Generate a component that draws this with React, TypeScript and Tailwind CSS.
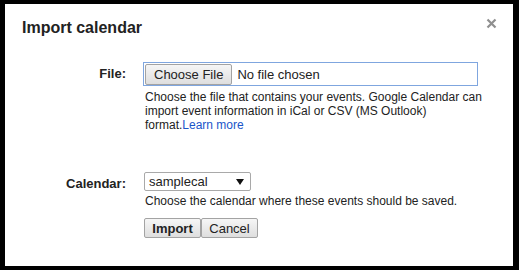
import React from 'react'

function CloseIcon() {
  return (
    <svg width="11" height="11" viewBox="0 0 11 11" className="block">
      <path d="M1.5 1.5 L9.5 9.5 M9.5 1.5 L1.5 9.5" stroke="#8f8f8f" strokeWidth="2.2" strokeLinecap="butt" />
    </svg>
  )
}

function Caret() {
  return (
    <svg width="8" height="6" viewBox="0 0 8 6" className="block">
      <path d="M0 0 L8 0 L4 6 Z" fill="#111" />
    </svg>
  )
}

const btn =
  'border border-[#a3a3a3] rounded-[2px] bg-gradient-to-b from-[#f6f6f6] to-[#dedede] text-[13px] leading-none text-[#222]'

export default function App() {
  return (
    <div className="w-[519px] h-[270px] bg-black pt-[4px] pl-[5px] pr-[6px] pb-[4px] font-['Liberation_Sans',Arial,sans-serif] text-[12px] text-[#222]">
      <div className="bg-white h-full pl-[17px] pr-[16px] pt-[14px]">
        <div className="flex items-start justify-between">
          <h1 className="text-[16px] leading-4 font-bold text-[#222] pt-[2px]">Import calendar</h1>
          <CloseIcon />
        </div>

        <div className="mt-[26px] flex">
          <div className="w-[104px] text-right font-bold text-[13px] pt-[5px] leading-[14px]">File:</div>
          <div className="ml-[17px]">
            <div className="w-[335px] h-[24px] border border-[#7fa6df] flex items-center pl-[1px]">
              <div className={btn + ' h-[21px] px-[8px] flex items-center'}>Choose File</div>
              <span className="ml-[5px] text-[13px] leading-none">No file chosen</span>
            </div>
            <p className="mt-[4px] w-[345px] leading-[14px] pl-[2px]">
              Choose the file that contains your events. Google Calendar can import event information in iCal or CSV (MS Outlook) format.
              <a className="text-[#1a55c9]">Learn more</a>
            </p>
          </div>
        </div>

        <div className="mt-[40px] flex">
          <div className="w-[104px] text-right font-bold text-[13px] pt-[5px] leading-[14px]">Calendar:</div>
          <div className="ml-[18px]">
            <div className="w-[107px] h-[19px] border border-[#a9a9a9] rounded-[2px] flex items-center justify-between pl-[4px] pr-[6px]">
              <span className="text-[13px] leading-none">samplecal</span>
              <Caret />
            </div>
            <p className="mt-[3px] leading-[14px] pl-[1px]">Choose the calendar where these events should be saved.</p>
            <div className="mt-[10px] flex">
              <button className={btn + ' h-[20px] font-bold w-[57px]'}>Import</button>
              <button className={btn + ' h-[20px] w-[57px]'}>Cancel</button>
            </div>
          </div>
        </div>
      </div>
    </div>
  )
}
